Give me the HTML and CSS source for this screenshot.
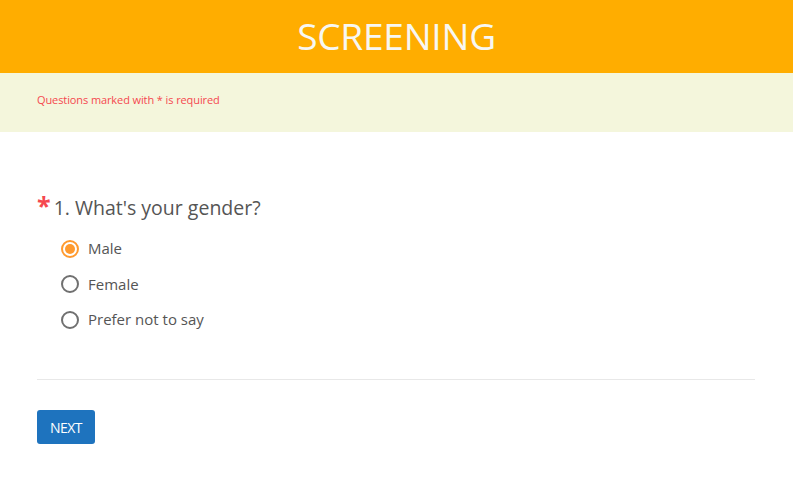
FILE: index.html
```html
<!DOCTYPE html>
<html>
<head>
<meta charset="utf-8">
<link rel="stylesheet" href="styles.css">
</head>
<body>
<header class="banner"><h1 class="title">SCREENING</h1></header>
<div class="notice"><span class="notice-text">Questions marked with * is required</span></div>
<main class="content">
  <div class="question">
    <div class="q-title"><span class="req">*</span><span>1. What's your gender?</span></div>
    <div class="options">
      <label class="option"><span class="radio checked"></span><span>Male</span></label>
      <label class="option"><span class="radio"></span><span>Female</span></label>
      <label class="option"><span class="radio"></span><span>Prefer not to say</span></label>
    </div>
  </div>
  <hr class="divider">
  <button class="next">NEXT</button>
</main>
</body>
</html>
```
FILE: styles.css
```css
* { box-sizing: border-box; }
html, body { margin: 0; padding: 0; background: #fff; font-family: "Open Sans", "Liberation Sans", sans-serif; }
.banner { background: #FFAD00; height: 73px; display: flex; align-items: center; justify-content: center; }
.title { margin: 0; color: #f7f7f2; font-weight: 400; font-size: 37px; letter-spacing: -0.2px; line-height: 1; padding-bottom: 2px; }
.notice { background: #F4F6DC; height: 59px; padding: 14px 37px 0; }
.notice-text { color: #f5484f; font-size: 11px; letter-spacing: -0.1px; }
.content { padding: 63px 38px 0 37px; }
.q-title { display: flex; align-items: flex-start; color: #555; font-size: 19.5px; line-height: 26px; }
.req { color: #f5484f; font-size: 25px; font-weight: 700; line-height: 26px; margin-right: 3px; position: relative; top: -3px; }
.options { display: flex; flex-direction: column; gap: 14.5px; padding: 17px 0 0 24px; }
.option { display: flex; align-items: center; gap: 9px; color: #555; font-size: 15px; line-height: 21px; }
.radio { width: 18px; height: 18px; border: 2px solid #707070; border-radius: 50%; display: flex; align-items: center; justify-content: center; }
.radio.checked { border-color: #FF9A2E; }
.radio.checked::after { content: ""; width: 10px; height: 10px; border-radius: 50%; background: #FF9A2E; }
.divider { border: 0; border-top: 1px solid #e8e8e8; margin: 49px 0 0; }
.next { margin-top: 30px; background: #1E73BE; color: #fff; border: 0; border-radius: 3px; height: 34px; width: 58px; font-family: "Open Sans", sans-serif; font-size: 14px; padding: 0; letter-spacing: -0.5px; }
```
